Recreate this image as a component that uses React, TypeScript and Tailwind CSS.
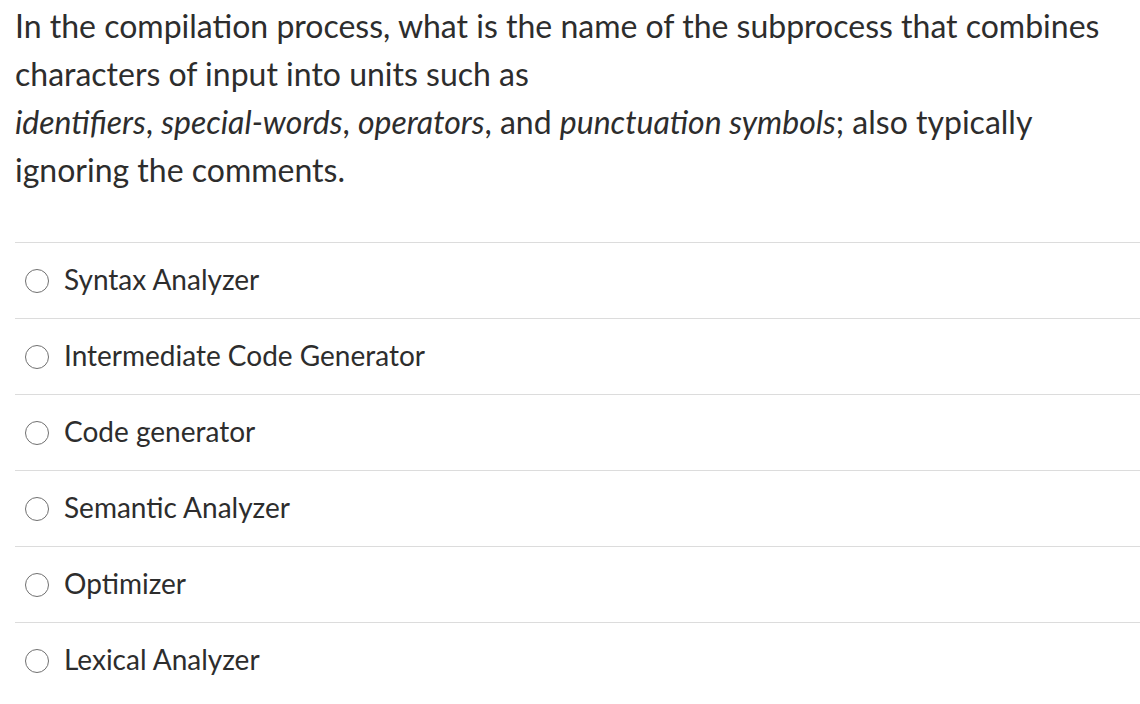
const options = [
  "Syntax Analyzer",
  "Intermediate Code Generator",
  "Code generator",
  "Semantic Analyzer",
  "Optimizer",
  "Lexical Analyzer",
];

function Radio() {
  return <span className="inline-block h-[24px] w-[24px] shrink-0 rounded-full border-[1.5px] border-[#707070] bg-white" />;
}

export default function App() {
  return (
    <div className="min-h-screen bg-white pt-[2px]" style={{ fontFamily: "Lato, 'Open Sans', sans-serif" }}>
      <p className="pl-[15px] text-[32px] leading-[48px] text-[#2d2d2d]">
        In the compilation process, what is the name of the subprocess that combines characters of input into units such as
        <br />
        <em>identifiers</em>, <em>special-words</em>, <em>operators</em>, and <em>punctuation symbols</em>; also typically ignoring the comments.
      </p>
      <div className="ml-[15px] mt-[48px]">
        {options.map((opt) => (
          <div key={opt} className="flex h-[76px] items-center gap-[15px] border-t border-[#dcdcdc] pl-[10px]">
            <Radio />
            <span className="pb-[4px] text-[28px] text-[#2d2d2d]">{opt}</span>
          </div>
        ))}
      </div>
    </div>
  );
}
